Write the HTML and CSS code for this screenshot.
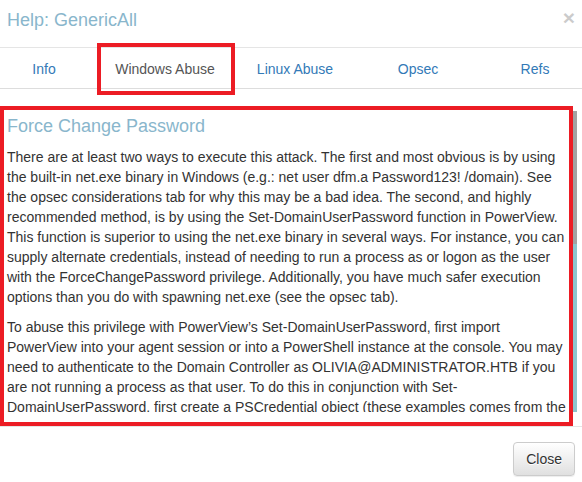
FILE: index.html
```html
<!DOCTYPE html>
<html>
<head>
<meta charset="utf-8">
<link rel="stylesheet" href="styles.css">
</head>
<body>
<div class="modal">
  <div class="modal-header">
    <h4 class="modal-title">Help: GenericAll</h4>
    <button class="close" type="button">×</button>
  </div>
  <ul class="tabs">
    <li><a>Info</a></li>
    <li class="active"><a>Windows Abuse</a></li>
    <li><a>Linux Abuse</a></li>
    <li><a>Opsec</a></li>
    <li><a>Refs</a></li>
    <li class="annot-tab"></li>
  </ul>
  <div class="modal-body">
    <div class="scroller">
      <div class="content">
        <h4 class="section-title">Force Change Password</h4>
        <p>There are at least two ways to execute this attack. The first and most obvious is by using the built-in net.exe binary in Windows (e.g.: net user dfm.a Password123! /domain). See the opsec considerations tab for why this may be a bad idea. The second, and highly recommended method, is by using the Set-DomainUserPassword function in PowerView. This function is superior to using the net.exe binary in several ways. For instance, you can supply alternate credentials, instead of needing to run a process as or logon as the user with the ForceChangePassword privilege. Additionally, you have much safer execution options than you do with spawning net.exe (see the opsec tab).</p>
        <p>To abuse this privilege with PowerView’s Set-DomainUserPassword, first import PowerView into your agent session or into a PowerShell instance at the console. You may need to authenticate to the Domain Controller as OLIVIA@ADMINISTRATOR.HTB if you are not running a process as that user. To do this in conjunction with Set-DomainUserPassword, first create a PSCredential object (these examples comes from the PowerView help documentation):</p>
      </div>
      <div class="scrollbar"><div class="thumb"></div></div>
    </div>
    <div class="annot-body"></div>
  </div>
  <div class="modal-footer">
    <button class="btn" type="button">Close</button>
  </div>
</div>
</body>
</html>
```
FILE: styles.css
```css
* { box-sizing: border-box; }
html, body {
  margin: 0;
  padding: 0;
  background: #fff;
  font-family: "Liberation Sans", Arial, sans-serif;
  font-size: 14px;
  color: #333;
}
.modal {
  width: 582px;
  height: 482px;
  overflow: hidden;
}
.modal-header {
  height: 48px;
  border-bottom: 1px solid #e5e5e5;
  padding: 7px 7px 0 7px;
  display: flex;
  justify-content: space-between;
  align-items: flex-start;
}
.modal-title {
  margin: 0;
  font-size: 18px;
  font-weight: normal;
  line-height: 26px;
  color: #89b6cc;
}
.close {
  border: 0;
  background: none;
  padding: 0;
  margin-top: 0;
  font-family: "Liberation Sans", Arial, sans-serif;
  font-size: 21px;
  font-weight: bold;
  line-height: 1;
  color: #000;
  opacity: 0.2;
}
.tabs {
  position: relative;
  list-style: none;
  margin: 0;
  padding: 0;
  display: grid;
  grid-template-columns: 88px 154px 106px 140px 1fr;
  border-bottom: 1px solid #ddd;
}
.tabs li a {
  display: block;
  text-align: center;
  padding: 11px 0 9px;
  line-height: 20px;
  color: #337ab7;
}
.tabs li.active a {
  color: #555;
}
.annot-tab {
  position: absolute;
  left: 97px;
  top: -5px;
  width: 138px;
  height: 52px;
  border: 4px solid #ec1c24;
}
.modal-body {
  position: relative;
  height: 337px;
  padding-top: 21px;
}
.scroller {
  display: grid;
  grid-template-columns: 573px 4px;
  width: 577px;
  height: 302px;
}
.content {
  height: 302px;
  overflow: hidden;
  padding: 0 7px;
}
.section-title {
  margin: 6px 0 11px;
  font-size: 18px;
  font-weight: normal;
  line-height: 20px;
  color: #89b6cc;
}
.content p {
  margin: 0 0 10px;
  line-height: 20px;
}
.scrollbar {
  margin-top: 1px;
  background: #8cc4cc;
}
.thumb {
  height: 133px;
  background: #a2a2a2;
}
.annot-body {
  position: absolute;
  left: 0;
  top: 17px;
  width: 573px;
  height: 320px;
  border: 4px solid #ec1c24;
}
.modal-footer {
  border-top: 1px solid #e5e5e5;
  padding: 15px 7px 15px;
  display: flex;
  justify-content: flex-end;
}
.btn {
  font-family: "Liberation Sans", Arial, sans-serif;
  font-size: 14px;
  line-height: 20px;
  padding: 6px 12px;
  color: #333;
  border: 1px solid #ccc;
  border-radius: 4px;
  background: linear-gradient(to bottom, #fff 0, #e0e0e0 100%);
  text-shadow: 0 1px 0 #fff;
  box-shadow: inset 0 1px 0 rgba(255,255,255,.15), 0 1px 1px rgba(0,0,0,.075);
}
```
